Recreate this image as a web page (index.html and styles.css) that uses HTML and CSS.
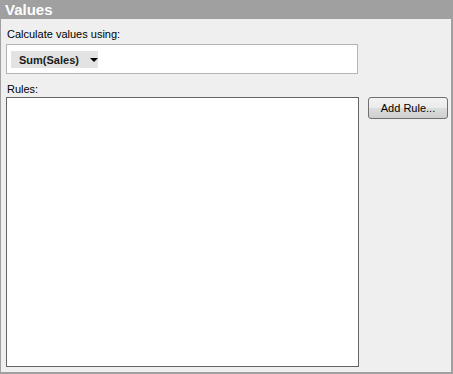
FILE: index.html
```html
<!DOCTYPE html>
<html>
<head>
<meta charset="utf-8">
<link rel="stylesheet" href="styles.css">
</head>
<body>
<div class="panel">
  <div class="header">Values</div>
  <div class="content">
    <div class="label">Calculate values using:</div>
    <div class="combo">
      <div class="dropdown"><span class="dd-text">Sum(Sales)</span><span class="arrow"></span></div>
    </div>
    <div class="label rules-label">Rules:</div>
    <div class="rules-row">
      <div class="listbox"></div>
      <button class="btn">Add Rule...</button>
    </div>
  </div>
</div>
</body>
</html>
```

FILE: styles.css
```css
html, body {
  margin: 0;
  padding: 0;
  background: #efefef;
}
body {
  font-family: "Liberation Sans", Arial, sans-serif;
  font-size: 11px;
  color: #000;
}
.panel {
  width: 453px;
  height: 374px;
  box-sizing: border-box;
  border-left: 1px solid #a0a0a0;
  border-right: 2px solid #a0a0a0;
  border-bottom: 2px solid #a0a0a0;
  background: #efefef;
  display: flex;
  flex-direction: column;
}
.header {
  height: 19px;
  background: #a0a0a0;
  color: #fff;
  font-weight: bold;
  font-size: 15px;
  line-height: 19px;
  padding-left: 5px;
  margin-left: -1px;
  margin-right: -2px;
}
.content {
  padding: 8px 0 0 5px;
  display: flex;
  flex-direction: column;
}
.label {
  height: 14px;
  line-height: 14px;
  padding-left: 1px;
}
.combo {
  margin-top: 3px;
  width: 352px;
  height: 30px;
  box-sizing: border-box;
  border: 1px solid #b4b4b4;
  background: #fff;
  padding: 6px 0 0 4px;
}
.dropdown {
  display: inline-flex;
  align-items: center;
  height: 17px;
  width: 87px;
  box-sizing: border-box;
  background: #e3e3e3;
  padding-left: 8px;
  font-weight: bold;
  color: #1a1a1a;
}
.arrow {
  margin-left: 11px;
  width: 0;
  height: 0;
  border-left: 4px solid transparent;
  border-right: 4px solid transparent;
  border-top: 4px solid #000;
}
.rules-label {
  margin-top: 8px;
}
.rules-row {
  margin-top: 1px;
  display: flex;
  align-items: flex-start;
}
.listbox {
  width: 353px;
  height: 270px;
  box-sizing: border-box;
  border: 1px solid #646464;
  background: #fff;
}
.btn {
  margin-left: 9px;
  width: 80px;
  height: 22px;
  box-sizing: border-box;
  border: 1px solid #707070;
  border-radius: 3px;
  background: linear-gradient(#f2f2f2 0%, #ebebeb 50%, #dddddd 51%, #cfcfcf 100%);
  font-family: "Liberation Sans", Arial, sans-serif;
  font-size: 11px;
  color: #000;
  padding: 0;
}
```
